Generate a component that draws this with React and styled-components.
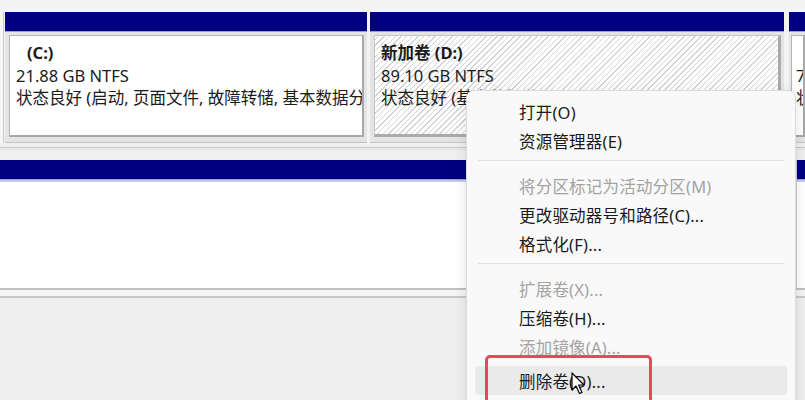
import React from 'react';
import styled, { createGlobalStyle, css } from 'styled-components';

const GlobalStyle = createGlobalStyle`
  html, body {
    margin: 0;
    padding: 0;
    width: 805px;
    height: 400px;
    overflow: hidden;
    background: #efefef;
    font-family: "Noto Sans", "Noto Sans CJK SC", sans-serif;
  }
`;

const Page = styled.div`
  position: relative;
  width: 805px;
  height: 400px;
  overflow: hidden;
  background: #efefef;
`;

const TopGap = styled.div`
  height: 12px;
  background: #f3f3f3;
`;

const DiskRow = styled.div`
  display: flex;
  height: 131px;
  background: #f3f3f3;
`;

const Stub = styled.div`
  width: 3px;
  margin-right: 1px;
  border-right: 1px solid #c9c9c9;
  background: #f6f6f6;
`;

const Partition = styled.div`
  display: flex;
  flex-direction: column;
  min-width: 0;
  width: ${(p) => (p.$width ? `${p.$width}px` : 'auto')};
  flex: ${(p) => (p.$width ? 'none' : '1')};
  margin-right: ${(p) => p.$gap || 0}px;
`;

const Header = styled.div`
  height: 20px;
  background: #000080;
  border-bottom: 1px solid #9a9ad0;
  box-sizing: border-box;
`;

const Body = styled.div`
  flex: 1;
  min-width: 0;
  background: #e4e4e4;
  padding: ${(p) => (p.$tight ? '3px 0 5px 2px' : '3px 3px 5px 4px')};
  display: flex;
  border-bottom: 1px solid #c4c4c4;
`;

const Box = styled.div`
  flex: 1;
  min-width: 0;
  box-sizing: border-box;
  padding: 6px 0 0 ${(p) => (p.$tight ? 4 : 6)}px;
  overflow: hidden;
  white-space: nowrap;
  color: #1b1b1b;
  font-size: 16.5px;
  line-height: 22.5px;
  ${(p) =>
    p.$hatched
      ? css`
          background: repeating-linear-gradient(
            -45deg,
            #ffffff 0px,
            #ffffff 3px,
            #d4d4d4 3px,
            #d4d4d4 4px
          );
          border-top: 1px solid #c6c6c6;
          border-left: 1px solid #c6c6c6;
          border-right: 3px solid #ababab;
          border-bottom: 3px solid #ababab;
        `
      : css`
          background: #ffffff;
          border: 1px solid #b4b4b4;
          border-right: 2px solid #a8a8a8;
          border-bottom: 2px solid #a8a8a8;
        `}
`;

const Title = styled.div`
  font-weight: bold;
  padding-left: ${(p) => p.$indent || 0}px;
`;

const Line = styled.div``;

const Divider = styled.div`
  height: 17px;
  background: #f0f0f0;
  box-sizing: border-box;
  padding-top: 4px;
  &::before {
    content: '';
    display: block;
    height: 1px;
    background: #c4c4c4;
    box-shadow: 0 2px 0 #e2e2e2;
  }
`;

const LowerRow = styled.div`
  display: flex;
  height: 128px;
`;

const LowerPanel = styled.div`
  display: flex;
  flex-direction: column;
  width: ${(p) => (p.$width ? `${p.$width}px` : 'auto')};
  flex: ${(p) => (p.$width ? 'none' : '1')};
  border-right: ${(p) => (p.$width ? '1px solid #d0d0d0' : 'none')};
`;

const WhiteArea = styled.div`
  flex: 1;
  background: #ffffff;
  border-top: 2px solid #c8c8e8;
`;

const BottomLines = styled.div`
  height: 10px;
  background: #f4f4f4;
  border-top: 2px solid #c2c2c2;
  border-bottom: 2px solid #c8c8c8;
  box-sizing: border-box;
`;

const Menu = styled.div`
  position: absolute;
  left: 466px;
  top: 90px;
  width: 330px;
  height: 330px;
  box-sizing: border-box;
  background: #f9f9f9;
  border: 1px solid #dcdcdc;
  border-radius: 8px;
  box-shadow: 0 4px 14px rgba(0, 0, 0, 0.12);
  padding: 6px 0;
`;

const Item = styled.div`
  height: 29px;
  margin: ${(p) => (p.$hover ? '5px' : '0')} 8px 0;
  padding-left: 44px;
  display: flex;
  align-items: center;
  border-radius: 4px;
  font-size: 16.5px;
  letter-spacing: 0.2px;
  color: ${(p) => (p.$disabled ? '#a3a3a3' : '#1a1a1a')};
  background: ${(p) => (p.$hover ? '#eaeaea' : 'transparent')};
`;

const Separator = styled.div`
  height: 1px;
  margin: 5px 11px 10px;
  background: #e2e2e2;
`;

const Highlight = styled.div`
  position: absolute;
  left: 485px;
  top: 355px;
  width: 167px;
  height: 60px;
  box-sizing: border-box;
  border: 3px solid #e6495c;
  border-radius: 5px;
`;

const Cursor = styled.svg`
  position: absolute;
  left: 571px;
  top: 372px;
`;

const items = [
  { label: '打开(O)' },
  { label: '资源管理器(E)' },
  { sep: true },
  { label: '将分区标记为活动分区(M)', disabled: true },
  { label: '更改驱动器号和路径(C)...' },
  { label: '格式化(F)...' },
  { sep: true },
  { label: '扩展卷(X)...', disabled: true },
  { label: '压缩卷(H)...' },
  { label: '添加镜像(A)...', disabled: true },
  { label: '删除卷(D)...', hover: true },
];

export default function App() {
  return (
    <Page>
      <GlobalStyle />
      <TopGap />
      <DiskRow>
        <Stub />
        <Partition $width={362} $gap={3}>
          <Header />
          <Body>
            <Box>
              <Title $indent={11}>(C:)</Title>
              <Line>21.88 GB NTFS</Line>
              <Line>状态良好 (启动, 页面文件, 故障转储, 基本数据分区)</Line>
            </Box>
          </Body>
        </Partition>
        <Partition $width={414} $gap={5}>
          <Header />
          <Body>
            <Box $hatched>
              <Title>新加卷 (D:)</Title>
              <Line>89.10 GB NTFS</Line>
              <Line>状态良好 (基本数据分区)</Line>
            </Box>
          </Body>
        </Partition>
        <Partition>
          <Header />
          <Body $tight>
            <Box $tight>
              <Title>&nbsp;</Title>
              <Line>7</Line>
              <Line>状</Line>
            </Box>
          </Body>
        </Partition>
      </DiskRow>
      <Divider />
      <LowerRow>
        <LowerPanel $width={796}>
          <Header />
          <WhiteArea />
        </LowerPanel>
        <LowerPanel>
          <Header />
          <WhiteArea />
        </LowerPanel>
      </LowerRow>
      <BottomLines />

      <Menu>
        {items.map((it, i) =>
          it.sep ? (
            <Separator key={i} />
          ) : (
            <Item key={i} $disabled={it.disabled} $hover={it.hover}>
              {it.label}
            </Item>
          )
        )}
      </Menu>
      <Highlight />
      <Cursor width="16" height="24" viewBox="0 0 16 24">
        <path
          d="M1 1 L1 18 L5 14 L8.5 21.5 L11 20.4 L7.6 13 L13 13 Z"
          fill="#ffffff"
          stroke="#000000"
          strokeWidth="1.2"
          strokeLinejoin="round"
        />
      </Cursor>
    </Page>
  );
}
